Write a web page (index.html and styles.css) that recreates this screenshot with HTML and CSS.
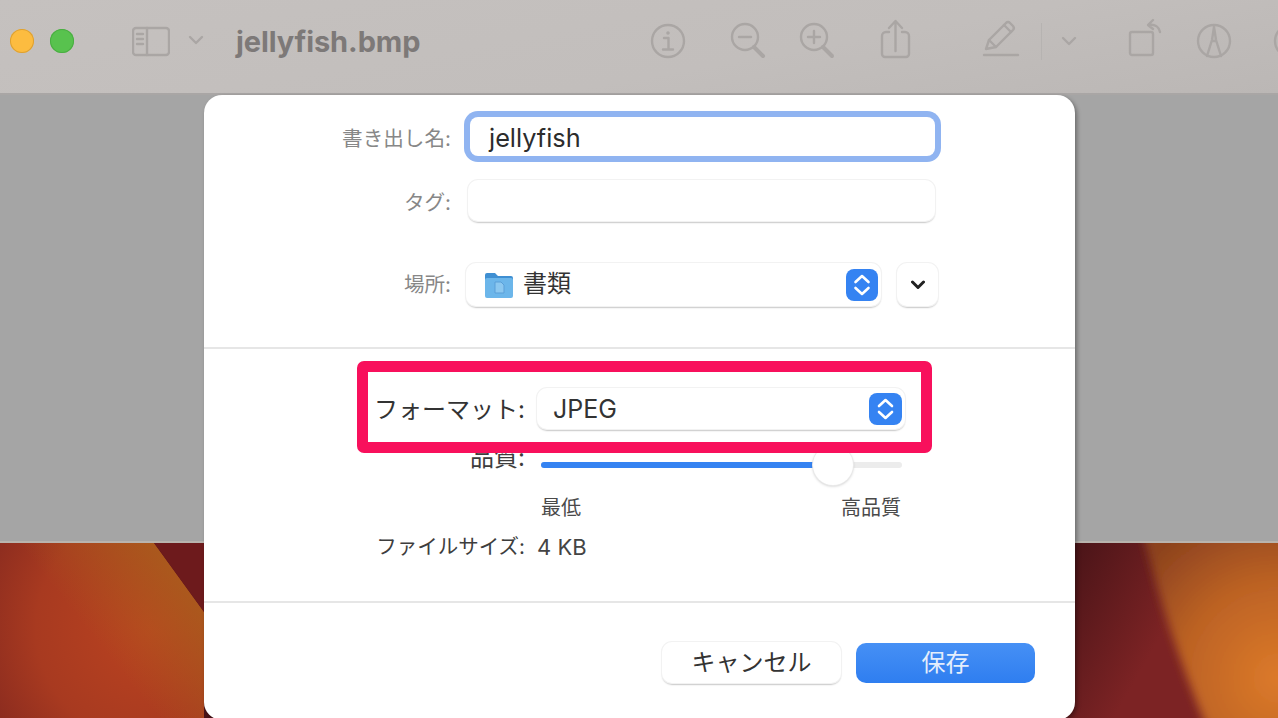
FILE: index.html
```html
<!DOCTYPE html>
<html lang="ja">
<head>
<meta charset="utf-8">
<title>jellyfish.bmp</title>
<link rel="stylesheet" href="styles.css">
</head>
<body>
<div class="stage">
  <header class="toolbar">
    <span class="light light-yellow"></span>
    <span class="light light-green"></span>
    <svg class="tool t-sidebar" width="38" height="48" viewBox="0 0 38 48"><rect x="1" y="11" width="36" height="27" rx="3"/><path d="M15 11v27M5 17h6M5 22h6M5 27h6"/></svg>
    <svg class="tool t-chev-a" width="16" height="48" viewBox="0 0 16 48"><path d="M2 20l6 6 6-6"/></svg>
    <span class="doc-title">jellyfish.bmp</span>
    <svg class="tool" width="36" height="48" viewBox="0 0 36 48"><circle cx="18" cy="24" r="16"/><circle class="solid" cx="18" cy="16" r="1.8"/><path d="M14 21h4.500v11M13 32.500h10"/></svg>
    <svg class="tool t-zoomout" width="38" height="48" viewBox="0 0 38 48"><circle cx="17" cy="20" r="13"/><path d="M11 20h12"/><path class="thick" d="M26 30l9 9"/></svg>
    <svg class="tool t-zoomin" width="38" height="48" viewBox="0 0 38 48"><circle cx="17" cy="20" r="13"/><path d="M11 20h12M17 14v12"/><path class="thick" d="M26 30l9 9"/></svg>
    <svg class="tool t-share" width="35" height="48" viewBox="0 0 35 48"><path d="M11 15H8a4 4 0 0 0-4 4v18a3 3 0 0 0 3 3h21a3 3 0 0 0 3-3V19a4 4 0 0 0-4-4h-3"/><path d="M17.500 34V5M11 11l6.500-7 6.500 7"/></svg>
    <svg class="tool t-pencil" width="38" height="48" viewBox="0 0 38 48"><path d="M4 32l3-9L24 6a3 3 0 0 1 4 0l3 3a3 3 0 0 1 0 4L14 30z"/><path d="M7 23l7 7M22 8l7 7"/><path d="M2 38h34"/></svg>
    <span class="tool-sep"></span>
    <svg class="tool t-chev-b" width="16" height="48" viewBox="0 0 16 48"><path d="M2 21l6 6 6-6"/></svg>
    <svg class="tool t-rotate" width="36" height="48" viewBox="0 0 36 48"><rect x="3" y="15" width="23" height="23" rx="2"/><path d="M22 8c6-1 10 2 11 7M26 3l-5 5 5 4"/></svg>
    <svg class="tool t-markup" width="36" height="48" viewBox="0 0 36 48"><circle cx="18" cy="24" r="16"/><path d="M11 39l5-16 2-13 2 13 5 16M16 24h4"/></svg>
    <svg class="tool t-next" width="36" height="48" viewBox="0 0 36 48"><circle cx="18" cy="24" r="16"/></svg>
  </header>

  <div class="window-body"></div>

  <div class="wallpaper">
    <svg class="wallpaper-art" width="1278" height="175" viewBox="0 0 1278 175">
      <defs>
        <radialGradient id="wpLeft" gradientUnits="userSpaceOnUse" cx="150" cy="85" r="190">
          <stop offset="0" stop-color="#ba4320"/>
          <stop offset="0.6" stop-color="#a83a20"/>
          <stop offset="1" stop-color="#86291f"/>
        </radialGradient>
        <linearGradient id="wpGlow" gradientUnits="userSpaceOnUse" x1="190" y1="10" x2="90" y2="90">
          <stop offset="0" stop-color="#a9601c" stop-opacity="0.95"/>
          <stop offset="1" stop-color="#a9601c" stop-opacity="0"/>
        </linearGradient>
        <linearGradient id="wpDark" gradientUnits="userSpaceOnUse" x1="1075" y1="0" x2="1180" y2="60">
          <stop offset="0" stop-color="#4a1418"/>
          <stop offset="1" stop-color="#7c2324"/>
        </linearGradient>
        <radialGradient id="wpRight" gradientUnits="userSpaceOnUse" cx="1278" cy="135" r="175">
          <stop offset="0" stop-color="#dc7a2a"/>
          <stop offset="0.55" stop-color="#bc6224"/>
          <stop offset="1" stop-color="#8c421e"/>
        </radialGradient>
        <filter id="wpBlur"><feGaussianBlur stdDeviation="5"/></filter>
      </defs>
      <rect width="1278" height="175" fill="url(#wpDark)"/>
      <path d="M-5 0H154L204 69V175H-5z" fill="url(#wpLeft)"/>
      <path d="M-5 0H154L204 69V175H-5z" fill="url(#wpGlow)"/>
      <path d="M154 0H204V69z" fill="#6d1a1c"/>
      <path d="M1143 -10C1160 60 1180 120 1207 185H1290V-10z" fill="url(#wpRight)" filter="url(#wpBlur)"/>
    </svg>
  </div>

  <section class="dialog">
    <div class="top-form">
      <label class="row row-name">
        <span class="label label-dim">書き出し名:</span>
        <span class="field field-focus">jellyfish</span>
      </label>
      <label class="row row-tag">
        <span class="label label-dim">タグ:</span>
        <span class="field field-tag"></span>
      </label>
      <div class="row row-place">
        <span class="label label-dim label-place">場所:</span>
        <div class="select select-place">
          <svg class="folder" width="30" height="28" viewBox="0 0 30 28"><path fill="#3f8fd2" d="M1 4a2 2 0 0 1 2-2h8l3 3h13a2 2 0 0 1 2 2v4H1z"/><rect fill="#6cb6ea" x="1" y="7" width="28" height="20" rx="2"/><path fill="#8cc8f0" stroke="#5a9fd8" d="M11 11h6l3 3v8h-9z"/></svg>
          <span class="select-text place-text">書類</span>
          <svg class="stepper" width="32" height="32" viewBox="0 0 32 32"><rect width="32" height="32" rx="8" fill="#3583f2"/><path d="M9.500 13l6.500-6 6.500 6M9.500 19l6.500 6 6.500-6"/></svg>
        </div>
        <div class="more">
          <svg width="14" height="10" viewBox="0 0 14 10"><path d="M1.500 2l5.500 5.500L12.500 2"/></svg>
        </div>
      </div>
    </div>

    <div class="options">
      <div class="opt-row opt-quality">
        <span class="label opt-label quality-label">品質:</span>
        <div class="slider">
          <div class="slider-fill"></div>
          <div class="slider-thumb"></div>
        </div>
      </div>
      <div class="opt-row opt-scale">
        <span class="opt-label"></span>
        <div class="scale"><span>最低</span><span>高品質</span></div>
      </div>
      <div class="opt-row opt-size">
        <span class="label opt-label size-label">ファイルサイズ:</span>
        <span class="size-value">4 KB</span>
      </div>
    </div>

    <div class="actions">
      <button class="btn btn-cancel">キャンセル</button>
      <button class="btn btn-save">保存</button>
    </div>

    <div class="highlight">
      <span class="label hl-label">フォーマット:</span>
      <div class="select select-format">
        <span class="select-text format-text">JPEG</span>
        <svg class="stepper" width="33" height="32" viewBox="0 0 33 32"><rect width="33" height="32" rx="8" fill="#3583f2"/><path d="M10 13l6.500-6 6.500 6M10 19l6.500 6 6.500-6"/></svg>
      </div>
    </div>
  </section>
</div>
</body>
</html>
```

FILE: styles.css
```css
* { box-sizing: border-box; }
html, body { margin: 0; padding: 0; }
body {
  width: 1278px;
  height: 718px;
  overflow: hidden;
  font-family: Inter, "Noto Sans CJK JP", "Liberation Sans", sans-serif;
  color: #333;
}
.stage {
  position: relative;
  width: 1278px;
  height: 718px;
  overflow: hidden;
  display: flex;
  flex-direction: column;
  background: #a5a5a5;
}

/* Toolbar */
.toolbar {
  flex: 0 0 95px;
  display: flex;
  align-items: center;
  padding: 0 0 11px 10px;
  overflow: hidden;
  background: linear-gradient(170deg, #c5c1bf, #c2bebc 60%, #bbb7b5);
  border-bottom: 2px solid #a9a6a5;
}
.light { flex: none; width: 24px; height: 24px; border-radius: 50%; }
.light-yellow { background: #fcbc40; box-shadow: inset 0 0 0 1px #dca033; }
.light-green { margin-left: 16px; background: #58c24e; box-shadow: inset 0 0 0 1px #4aad42; }
.tool { flex: none; fill: none; stroke: #aaa6a4; stroke-width: 2.4; stroke-linecap: round; stroke-linejoin: round; }
.tool .thick { stroke-width: 4; }
.tool .solid { fill: #aaa6a4; stroke: none; }
.t-sidebar { margin-left: 58px; }
.t-chev-a { margin-left: 18px; }
.doc-title {
  flex: none;
  width: 414px;
  margin-left: 32px;
  font-size: 29px;
  font-weight: 700;
  letter-spacing: -0.1px;
  color: #7d7978;
}
.t-zoomout { margin-left: 42px; }
.t-zoomin { margin-left: 31px; }
.t-share { margin-left: 43px; }
.t-pencil { margin-left: 69px; }
.tool-sep { flex: none; width: 1px; height: 37px; margin-left: 21px; background: #b6b3b1; }
.t-chev-b { margin-left: 19px; }
.t-rotate { margin-left: 50px; }
.t-markup { margin-left: 33px; }
.t-next { margin-left: 41px; }

/* Window area and wallpaper */
.window-body {
  flex: 0 0 448px;
  background: #a5a5a5;
  border-bottom: 2px solid #b9b4ae;
}
.wallpaper { flex: 1; overflow: hidden; }
.wallpaper-art { display: block; }

/* Dialog */
.dialog {
  position: absolute;
  left: 204px;
  top: 95px;
  width: 871px;
  height: 625px;
  display: flex;
  flex-direction: column;
  background: #fff;
  border-radius: 18px;
  box-shadow: 2px 2px 4px rgba(0, 0, 0, 0.35);
}
.label { font-size: 20.6px; line-height: 24px; white-space: nowrap; text-align: right; color: #3d3d3d; }
.label-dim { color: #878787; padding-top: 4px; }
.label-place { padding-top: 0; }

.top-form {
  flex: 0 0 254px;
  padding-top: 22px;
  border-bottom: 2px solid #e6e6e6;
}
.row { display: flex; align-items: center; }
.row .label { flex: 0 0 247px; }
.row-tag { margin-top: 24px; }
.row-place { margin-top: 42px; }

.field {
  display: block;
  background: #fff;
  font-size: 25.3px;
  color: #2c2c2c;
}
.field-focus {
  width: 465px;
  height: 39px;
  margin-left: 19px;
  padding: 2px 0 0 19px;
  line-height: 37px;
  border-radius: 8px;
  box-shadow: 0 0 0 6px #90b4f1;
}
.field-tag {
  width: 467px;
  height: 41px;
  margin-left: 17px;
  border-radius: 10px;
  box-shadow: 0 0 0 1px #f2f2f2, 0 1.500px 1.500px rgba(0, 0, 0, 0.22);
}
.select {
  display: flex;
  align-items: center;
  background: #fff;
  border-radius: 10px;
  box-shadow: 0 0 0 1px #f2f2f2, 0 1.500px 1.500px rgba(0, 0, 0, 0.22);
}
.select-text { font-size: 24px; color: #333; }
.place-text { margin-bottom: 6px; }
.format-text { font-size: 25px; }
.stepper { flex: none; margin-left: auto; fill: none; stroke: #fff; stroke-width: 2.600; stroke-linecap: round; stroke-linejoin: round; }
.stepper rect { stroke: none; }
.select-place {
  width: 415px;
  height: 43px;
  margin-left: 15px;
  padding: 0 3px 0 18px;
}
.folder { flex: none; margin-right: 9px; }
.more {
  display: flex;
  align-items: center;
  justify-content: center;
  width: 41px;
  height: 43px;
  margin-left: 16px;
  background: #fff;
  border-radius: 10px;
  box-shadow: 0 0 0 1px #f2f2f2, 0 1.500px 1.500px rgba(0, 0, 0, 0.22);
}
.more svg { fill: none; stroke: #222; stroke-width: 3; stroke-linecap: round; stroke-linejoin: round; }

/* Options */
.options {
  flex: 0 0 254px;
  padding-top: 98px;
  border-bottom: 2px solid #e6e6e6;
}
.opt-row { display: flex; align-items: flex-start; }
.opt-label { flex: 0 0 321px; }
.quality-label { margin-top: -1px; font-size: 24px; }
.size-label { font-size: 20.5px; }
.opt-scale { margin-top: 26px; }
.opt-size { margin-top: 15px; }
.slider {
  position: relative;
  width: 361px;
  height: 6px;
  margin: 15px 0 0 16px;
  background: #ececec;
  border-radius: 3px;
}
.slider-fill { width: 280px; height: 6px; background: #3583f2; border-radius: 3px; }
.slider-thumb {
  position: absolute;
  left: 272px;
  top: -17px;
  width: 40px;
  height: 40px;
  background: #fff;
  border-radius: 50%;
  box-shadow: 0 0 0 1px #eaeaea, 0 1px 3px rgba(0, 0, 0, 0.25);
}
.scale {
  display: flex;
  justify-content: space-between;
  width: 361px;
  margin-left: 16px;
  padding: 0 1px 0 0;
  font-size: 20px;
  line-height: 24px;
  color: #4a4a4a;
}
.size-value { margin-left: 12px; font-size: 22px; line-height: 24px; color: #444; }

/* Buttons */
.actions {
  display: flex;
  justify-content: flex-end;
  align-items: flex-end;
  gap: 15px;
  padding: 39px 40px 0 0;
}
.btn {
  width: 179px;
  padding: 0;
  border: 0;
  border-radius: 10px;
  font: inherit;
  font-size: 24px;
}
.btn-cancel {
  height: 41px;
  line-height: 39px;
  color: #333;
  background: #fff;
  box-shadow: 0 0 0 1px #f2f2f2, 0 1.500px 1.500px rgba(0, 0, 0, 0.22);
}
.btn-save {
  height: 40px;
  line-height: 38px;
  color: #e4eefc;
  background: linear-gradient(#4690f5, #2f7ef0);
}

/* Red annotation drawn over the dialog */
.highlight {
  position: absolute;
  left: 153px;
  top: 266px;
  width: 575px;
  height: 92px;
  display: flex;
  align-items: flex-start;
  padding-top: 16px;
  background: #fff;
  border: 11px solid #f8105c;
  border-radius: 7px;
}
.hl-label { flex: 0 0 157px; margin-top: 10px; font-size: 24px; color: #333; }
.select-format {
  width: 368px;
  height: 41px;
  margin-left: 12px;
  padding: 0 3px 0 16px;
}
```
